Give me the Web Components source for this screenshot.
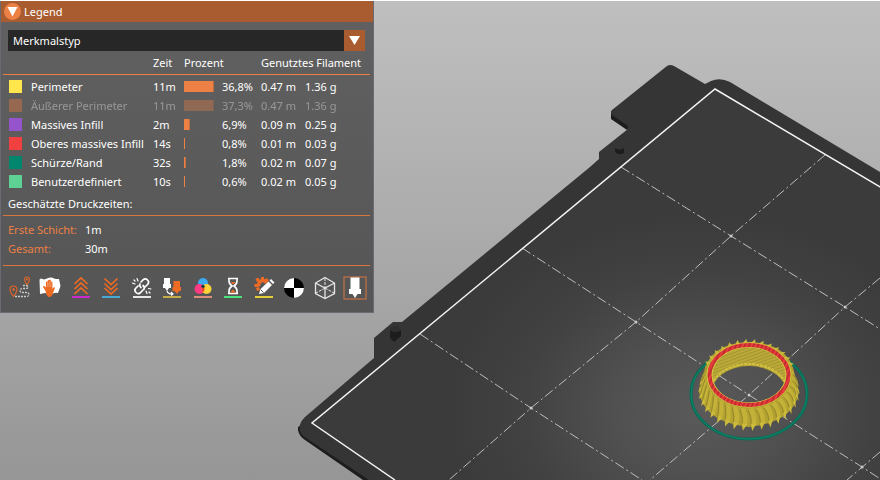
<!DOCTYPE html>
<html lang="de">
<head>
<meta charset="utf-8">
<title>Legend</title>
<style>
html, body { margin: 0; height: 100%; }
body { font: 11px/19px "Noto Sans", "Open Sans", sans-serif; overflow: hidden; }
</style>
</head>
<body>
<preview-app></preview-app>

<template id="app-tpl">
<style>
:host { display: grid; height: 100vh; box-sizing: border-box; border-top: 1px solid #fff; background: linear-gradient(#bfbfbf, #969696); }
plate-scene, legend-panel { grid-area: 1 / 1; min-width: 0; min-height: 0; }
legend-panel { justify-self: start; align-self: start; }
</style>
<plate-scene></plate-scene>
<legend-panel heading="Legend">
  <feature-table></feature-table>
  <print-times></print-times>
  <view-toolbar></view-toolbar>
</legend-panel>
</template>

<template id="scene-tpl">
<style>
:host { display: block; overflow: hidden; }
svg { display: block; width: 100%; height: 100%; }
</style>
<svg viewBox="0 1 880 479" preserveAspectRatio="xMinYMin slice" aria-hidden="true">
<defs>
<radialGradient id="light" gradientUnits="userSpaceOnUse" cx="700" cy="410" r="250" gradientTransform="translate(0 90) scale(1 .78)">
<stop offset="0" stop-color="#5a5a5a"/><stop offset=".35" stop-color="#505050"/><stop offset=".7" stop-color="#424242"/><stop offset="1" stop-color="#3b3b3b"/>
</radialGradient>
<clipPath id="mouth"><ellipse cx="749" cy="375" rx="37" ry="28"/></clipPath>
<mask id="hole" maskUnits="userSpaceOnUse" x="680" y="320" width="140" height="130"><rect x="680" y="320" width="140" height="130" fill="#fff"/><g clip-path="url(#mouth)"><ellipse cx="749" cy="394" rx="38" ry="28" fill="#000"/></g></mask>
<pattern id="hatch" width="4" height="6" patternUnits="userSpaceOnUse" patternTransform="rotate(25)"><rect width="4" height="6" fill="#ea3c3c"/><rect width="2" height="6" fill="#c22c30"/></pattern>
<pattern id="weave" width="3" height="3" patternUnits="userSpaceOnUse" patternTransform="rotate(-20)"><rect width="3" height="3" fill="#bbaa39"/><rect width="3" height="1" fill="#a4952f"/></pattern>
</defs>
<path fill="#1d1d1d" d="M298 427v3q1 6 7 10l58 40h60L310 420zM611 111v8l16 11 4-6z"/>
<path fill="#353535" d="M305 417L374 358V338L393 322H402L590 167L599 159V152L628 129V126L612 115Q610 112 612 110L667 66Q670 64 674 66L705 84L711 81Q720 77 730 82L880 172V480H369L303 436Q295 427 305 417z"/>
<path fill="#1d1d1d" d="M615 148v4q4 4 9 1v-5q-4 3-9 0zM390 330v8l4 4 7-6v-6q-6 4-11 0z"/>
<ellipse cx="395" cy="329" rx="5" ry="3" fill="#2f2f2f"/>
<path fill="url(#light)" d="M715 89L312 423L395 480H880V187z"/>
<path fill="none" stroke="#bdbdbd" stroke-width="1" stroke-dasharray="10 3 2 3" d="M621 167L731 236L845 307L880 329M522 248L636 322L749 395L862 467L882 480M420 334L531 408L642 480M825 155L731 236L636 322L531 408L449 480M880 278L845 307L749 395L650 480M880 452L847 480"/>
<g fill="#ccc"><circle cx="731" cy="236" r="1.500"/><circle cx="845" cy="307" r="1.500"/><circle cx="636" cy="322" r="1.500"/><circle cx="749" cy="395" r="1.500"/><circle cx="862" cy="467" r="1.500"/><circle cx="531" cy="408" r="1.500"/></g>
<path fill="none" stroke="#f4f4f4" stroke-width="1.500" d="M395 480L312 423L715 89L882 188"/>
<ellipse cx="749" cy="394" rx="58" ry="45" fill="none" stroke="#0a6a55" stroke-width="3"/>
<ellipse cx="749" cy="394" rx="58" ry="45" fill="none" stroke="#0b8a6c" stroke-width="1"/>
<g mask="url(#hole)">
<path d="M703 376L699 392Q704 422 749 427Q794 422 799 392L795 376Q790 343 749 342Q708 343 703 376z" fill="#b3a231"/>
<g id="teeth"></g>
<ellipse cx="749" cy="375" rx="39" ry="30" fill="url(#weave)"/>
<ellipse cx="749" cy="393" rx="39" ry="29" fill="none" stroke="#d3c242" stroke-width="2" stroke-dasharray="3 1" clip-path="url(#mouth)"/>
</g>
<ellipse cx="749" cy="375" rx="42" ry="32" fill="none" stroke="#d9c845" stroke-width="1"/>
<ellipse cx="749" cy="375" rx="37" ry="28" fill="none" stroke="#d9c845" stroke-width="1"/>
<ellipse cx="749" cy="375" rx="39.500" ry="30" fill="none" stroke="url(#hatch)" stroke-width="4"/>
</svg>
</template>

<template id="panel-tpl">
<style>
:host { display: block; box-sizing: border-box; width: 374px; max-width: 100%; border: solid #6a6a72; border-width: 0 1px 1px; background: linear-gradient(#616161, #555); color: #fff; }
header { display: flex; align-items: center; gap: 3px; height: 21px; padding-left: 3px; background: #a95c30; }
header button { display: flex; padding: 0; border: 0; background: none; }
h1 { margin: 0; font: inherit; }
.pick { display: grid; margin: 8px 8px 0 7px; }
.pick > * { grid-area: 1 / 1; }
select { appearance: none; height: 21px; border: 0; border-radius: 0; margin: 0; padding: 0 24px 0 5px; background: #272727; color: #fff; font: inherit; width: 100%; }
.arrow { justify-self: end; pointer-events: none; background: #a95c30; }
</style>
<header><button aria-label="Einklappen"><svg width="17" height="17" viewBox="0 0 17 17"><circle cx="8.500" cy="8.500" r="8.500" fill="#ed8044"/><path d="M3.500 4h10l-5 9.500z" fill="#fff"/></svg></button><h1></h1></header>
<div class="pick"><select aria-label="Ansicht"><option>Merkmalstyp</option></select><svg class="arrow" width="21" height="21" viewBox="0 0 21 21"><path d="M5 6h11l-5.500 9z" fill="#fff"/></svg></div>
<slot></slot>
</template>

<template id="table-tpl">
<style>
:host { display: block; padding: 0 3px 0 2px; }
table { width: 100%; table-layout: fixed; border-collapse: separate; border-spacing: 0; }
th, td { padding: 0; height: 19px; font-weight: 400; text-align: left; white-space: nowrap; }
thead th { height: 23px; border-bottom: 1px solid #ed8044; vertical-align: middle; }
tbody::before { content: ""; display: table-row; height: 2px; }
tbody th { padding-left: 6px; }
label { display: flex; align-items: center; gap: 9px; }
input { appearance: none; flex: none; width: 13px; height: 13px; margin: 0; background: var(--c); }
i { display: block; height: 11px; width: var(--w); background: #ed8044; box-shadow: inset -1px 0 var(--edge); }
.off { opacity: .35; }
</style>
<table>
<colgroup><col style="width:150px"><col style="width:31px"><col style="width:38px"><col style="width:39px"><col style="width:44px"><col></colgroup>
<thead><tr><th></th><th scope="col">Zeit</th><th scope="col" colspan="2">Prozent</th><th scope="col" colspan="2">Genutztes Filament</th></tr></thead>
<tbody></tbody>
</table>
</template>

<template id="times-tpl">
<style>
:host { display: block; padding: 0 3px 0 2px; }
h2 { margin: 0; padding: 3px 5px 2px; font: inherit; border-bottom: 1px solid #d9763f; }
dl { display: grid; grid-template-columns: 72px 1fr; column-gap: 5px; margin: 0; padding: 4px 5px 7px; border-bottom: 1px solid #d9763f; }
dt { color: #ed8044; white-space: nowrap; } dd { margin: 0; }
</style>
<h2>Geschätzte Druckzeiten:</h2>
<dl><dt>Erste Schicht:</dt><dd>1m</dd><dt>Gesamt:</dt><dd>30m</dd></dl>
</template>

<template id="bar-tpl">
<style>
:host { display: flex; justify-content: space-between; padding: 10px 6px 12px 7px; }
button { display: flex; padding: 0; border: 0; background: none; }
svg { width: 24px; height: 24px; }
</style>
</template>

<script>
const stamp = (el, id) => {
  const root = el.attachShadow({ mode: 'open' });
  root.append(document.getElementById(id).content.cloneNode(true));
  return root;
};

customElements.define('plate-scene', class extends HTMLElement {
  connectedCallback() {
    const root = stamp(this, 'scene-tpl');
    const n = 34, pt = (a, rx, ry, cy) => `${(749 + rx * Math.cos(a)).toFixed(1)} ${(cy + ry * Math.sin(a)).toFixed(1)}`;
    let out = '';
    for (let k = 0; k < n; k++) {
      const a = k * 2 * Math.PI / n, s = 2 * Math.PI / n, front = Math.sin(a) > -.25;
      if (front) {
        out += `<path fill="#c3b237" d="M${pt(a, 43, 33, 375)}L${pt(a + s * .6, 43, 33, 376)}Q${pt(a, 49, 37, 383)} ${pt(a + s * .2, 50, 38, 391)}L${pt(a - s * .3, 49, 36, 389)}Q${pt(a - s * .5, 47, 35, 382)} ${pt(a, 43, 33, 375)}z"/>`;
        out += `<path fill="none" stroke="#94862b" stroke-width="1" d="M${pt(a + s * .6, 44, 33, 377)}Q${pt(a + s * .1, 48, 36, 382)} ${pt(a + s * .3, 49, 37, 390)}"/>`;
        out += `<path fill="#cdbc3c" d="M${pt(a - s * .3, 48, 36, 388)}L${pt(a + s * .15, 51, 38, 393)}L${pt(a + s * .3, 48, 36, 388)}z"/>`;
      } else {
        out += `<path fill="#cdbc3c" d="M${pt(a - s * .3, 43, 32, 375)}L${pt(a + s * .2, 48, 37, 376)}L${pt(a + s * .3, 43, 32, 375)}z"/>`;
      }
    }
    root.getElementById('teeth').innerHTML = out;
  }
});

customElements.define('legend-panel', class extends HTMLElement {
  connectedCallback() {
    stamp(this, 'panel-tpl').querySelector('h1').textContent = this.getAttribute('heading');
  }
});

customElements.define('feature-table', class extends HTMLElement {
  connectedCallback() {
    const rows = [
      ['Perimeter', '#ffe64d', '11m', 30, '36,8%', '0.47 m', '1.36 g'],
      ['Äußerer Perimeter', '#ff7d38', '11m', 30, '37,3%', '0.47 m', '1.36 g', 1],
      ['Massives Infill', '#9654cc', '2m', 6, '6,9%', '0.09 m', '0.25 g'],
      ['Oberes massives Infill', '#f04040', '14s', 1, '0,8%', '0.01 m', '0.03 g'],
      ['Schürze/Rand', '#00876e', '32s', 2, '1,8%', '0.02 m', '0.07 g'],
      ['Benutzerdefiniert', '#5ed194', '10s', 1, '0,6%', '0.02 m', '0.05 g']
    ];
    stamp(this, 'table-tpl').querySelector('tbody').innerHTML = rows.map(([n, c, t, w, p, m, g, off]) =>
      `<tr class="${off ? 'off' : ''}"><th scope="row"><label><input type="checkbox" style="--c:${c}" ${off ? '' : 'checked'}>${n}</label></th><td>${t}</td><td><i style="--w:${w}px;--edge:${w > 1 ? '#bd6c40' : '#ed8044'}"></i></td><td>${p}</td><td>${m}</td><td>${g}</td></tr>`).join('');
  }
});

customElements.define('print-times', class extends HTMLElement {
  connectedCallback() { stamp(this, 'times-tpl'); }
});

const line = c => `<path d="M3 21h18" stroke="${c}" stroke-width="2"/>`;
const ICONS = {
  'Eilgang': '<g fill="none" stroke="#d9652a" stroke-width="1.200"><path d="M5.500 20.500Q2 16 2 13.500a3.500 3.500 0 0 1 7 0Q9 16 5.500 20.500z"/><path d="M19 8.500Q16.500 5.500 16.500 3.500a2.500 2.500 0 0 1 5 0Q21.500 5.500 19 8.500z"/></g><circle cx="5.500" cy="13.500" r="1.200" fill="#ee6b23"/><circle cx="19" cy="3.500" r="1" fill="#ee6b23"/><path d="M7 20.500h11q3 0 3-2t-3-2h-3q-3 0-3-2t3-2h3q2 0 2-1.500t-2-1.500h-3" fill="none" stroke="#ccc" stroke-width="1.300" stroke-dasharray="2 1"/>',
  'Wischen': '<path d="M1.500 3.500L3 2.500l3 1 3-1q4-2 7 0l2 .5 3 0 1.500 7-2.500 7q-4-1-7 2l-6-2-5 1z" fill="#fff"/><path d="M7.500 15L5 11q0-1.500 1.500-1L8 11.500V6q.8-1.200 1.600 0v3V4.500q.8-1.200 1.600 0V9 4q.8-1.200 1.600 0v5-3q.8-1.200 1.600 0v7l1-1.500q1.200-.8 1.600.3L15 17q-1 4-3.500 4-3 0-4-6z" fill="#ee6b23"/><path d="M9.600 6v5M11.200 6v5M12.800 6v5" stroke="#fff" stroke-width=".3"/>',
  'Einzüge': '<path d="M5.500 8L12 2l6.500 6M5.500 13L12 7l6.500 6M5.500 18l6.500-6 6.500 6" fill="none" stroke="#ee6b23" stroke-width="1.700"/>' + line('#cc29cc'),
  'Wiedereinzüge': '<path d="M5.500 2.500l6.500 6 6.500-6M5.500 7.500l6.500 6 6.500-6M5.500 12l6.500 6 6.500-6" fill="none" stroke="#ee6b23" stroke-width="1.700"/>' + line('#4aa9d2'),
  'Nähte': '<g fill="none" stroke="#fff" stroke-width="1.700" stroke-linecap="round"><path d="M11 6l2.500-2.500q2-1.500 4 .5t.5 4L15 11M10 8q-1 2 1 3.500M13 14l-3 3q-2 1.500-4-.5t-.5-4L8 10M14 13q1-2-1-3.500"/><path d="M8 5L7 2.500M5 8L2.500 7M16 15l1 2.500M18.500 12.500l2.500.5M5 5L4 4M19 16l1 1" stroke-width="1.200"/></g>' + line('#e6e6e6'),
  'Werkzeugwechsel': '<path d="M4 2h6v6h1v4H9l-2 3-2-3H3V8h1z" fill="#fff"/><path d="M13.500 5h6.500v6h1v4h-2l-2 3-2.500-3h-2v-4h1z" fill="#ee6b23"/><path d="M7 15q1 3 5 3M11 16l2 2-2 1.500" fill="none" stroke="#fff" stroke-width="1.200"/>' + line('#c5ab4a'),
  'Farbwechsel': '<circle cx="12" cy="7" r="5" fill="#3ba9f0"/><circle cx="8.500" cy="13" r="5" fill="#ff3a83"/><circle cx="15.500" cy="13" r="5" fill="#ffd23a"/><path d="M12 9.500q3 3.500 0 7-3-3.500 0-7z" fill="#e9432a"/><path d="M12 8.500q2 1 2 2.500l-2 1-2-1q0-1.500 2-2.500z" fill="#193844"/>' + line('#d98e7a'),
  'Pausen': '<path d="M7 2.500h10M7 17.500h10M8 3v2q0 3 3 5-3 2-3 5v2M16 3v2q0 3-3 5 3 2 3 5v2" fill="none" stroke="#fff" stroke-width="1.600"/><path d="M9.500 6h5L12 8.500zM9 16.500l3-3 3 3z" fill="#ee6b23"/>' + line('#49e27b'),
  'Eigener G-Code': '<path d="M14.500 7A4 4 0 1 0 7 10.500" fill="none" stroke="#ee6b23" stroke-width="3.500"/><path d="M9 1h3v3H9zM3.500 3L6 1.500 8 4 5 6zM2.500 8h3v3h-3zM14 2l3 2-2 2-2-2zM4 12l3-1 1 3-3 1z" fill="#ee6b23"/><path d="M7 18l1.500-5 8-7.500 3.500 3.500-8 8zM17.500 4.500l1.500-1.500 3.500 3.500L21 8z" fill="#fff"/><path d="M8.500 13.500l3 3" stroke="#555"/>' + line('#e2cf35'),
  'Schwerpunkt': '<circle cx="12" cy="12" r="10" fill="#000"/><path d="M12 12H2A10 10 0 0 1 12 2zM12 12h10a10 10 0 0 1-10 10z" fill="#fff"/>',
  'Hülle': '<path d="M12 1.500l9.500 5.500v10.500L12 22.500 2.500 17.500V7zM2.500 7l9.500 5 9.500-5M12 12v10.500" fill="none" stroke="#e6e6e6" stroke-width="1.300"/><path d="M12 2v10M12 12l-9 5M12 12l9 5" fill="none" stroke="#e6e6e6" stroke-dasharray="3 1"/>',
  'Werkzeugmarkierung': '<rect x="1" y="1" width="22" height="22" fill="none" stroke="#d9763f"/><path d="M7.500 1.500h9V13H18v5h-3.500L12 22l-2.500-4H6v-5h1.500z" fill="#fff"/>'
};

customElements.define('view-toolbar', class extends HTMLElement {
  connectedCallback() {
    stamp(this, 'bar-tpl').append(...Object.entries(ICONS).map(([name, art]) => {
      const b = document.createElement('button');
      b.setAttribute('aria-label', name);
      b.innerHTML = `<svg viewBox="0 0 24 24">${art}</svg>`;
      return b;
    }));
  }
});

customElements.define('preview-app', class extends HTMLElement {
  connectedCallback() { stamp(this, 'app-tpl'); }
});
</script>
</body>
</html>
